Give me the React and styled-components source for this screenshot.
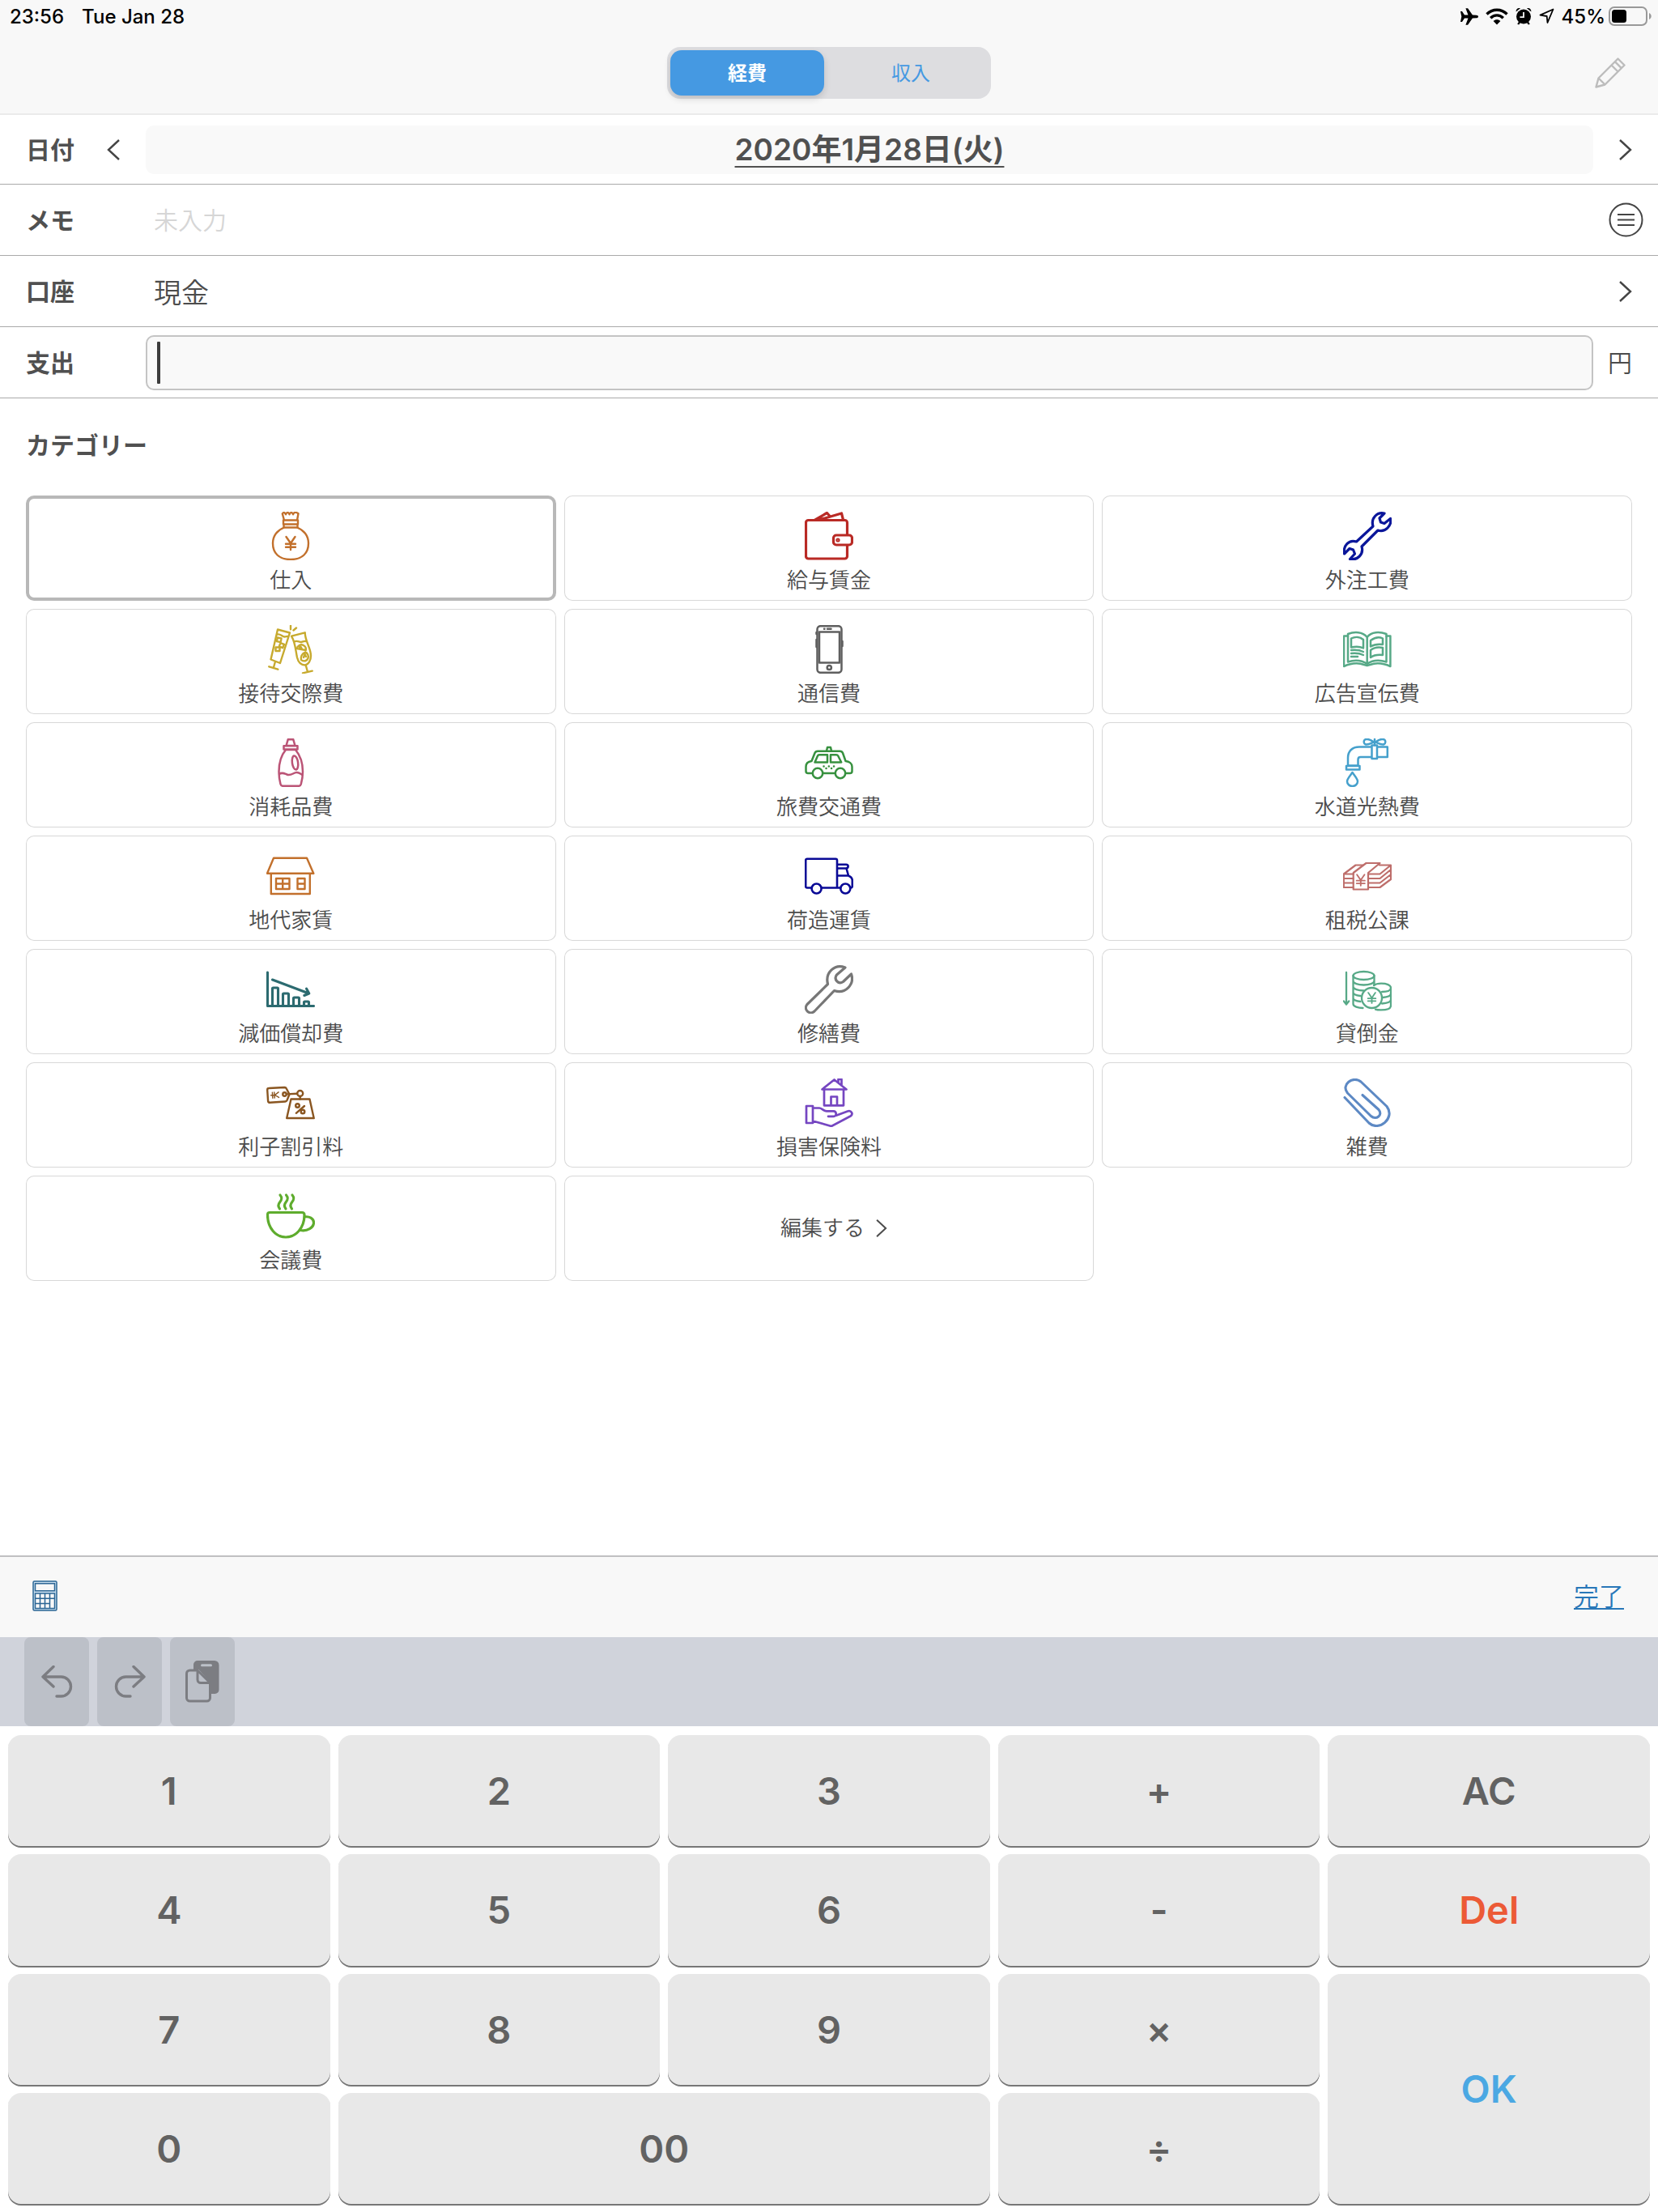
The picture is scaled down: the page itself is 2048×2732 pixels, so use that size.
import React from "react";
import styled, { createGlobalStyle, css } from "styled-components";

const GlobalStyle = createGlobalStyle`
  *, *::before, *::after { box-sizing: border-box; }
  body {
    margin: 0;
    background: #fff;
    color: #4c4c4c;
    font-family: Inter, "Noto Sans CJK JP", sans-serif;
    font-weight: 350;
  }
  button, input {
    margin: 0;
    padding: 0;
    border: 0;
    background: none;
    color: inherit;
    font: inherit;
    outline: none;
  }
  svg { display: block; flex: none; }
`;

const Page = styled.div`
  min-height: 100vh;
  display: flex;
  flex-direction: column;
`;

/* ---------- header ---------- */

const Header = styled.header`
  background: #f8f8f8;
  border-bottom: 2px solid #ebebeb;
`;

const StatusBar = styled.div`
  height: 40px;
  padding: 0 8px 0 12px;
  display: flex;
  align-items: center;
  justify-content: space-between;
  color: #000;
  font-size: 24px;
  font-weight: 500;
`;

const StatusGroup = styled.div`
  display: flex;
  align-items: center;
  gap: ${(p) => p.$gap}px;
`;

const BatteryGroup = styled.span`
  display: flex;
  align-items: center;
  gap: 4px;
`;

const NavBar = styled.div`
  height: 100px;
  padding: 0 40px;
  display: grid;
  grid-template-columns: 1fr auto 1fr;
  align-items: center;
`;

const Segmented = styled.div`
  grid-column: 2;
  width: 400px;
  height: 64px;
  padding: 4px;
  display: grid;
  grid-template-columns: 1fr 1fr;
  gap: 12px;
  border-radius: 16px;
  background: #dddde0;
`;

const Segment = styled.button`
  padding-bottom: 4px;
  border-radius: 14px;
  font-size: 24px;
  font-weight: 400;
  color: #4599e2;
  ${(p) =>
    p.$active &&
    css`
      color: #fff;
      font-weight: 700;
      background: #4599e2;
      box-shadow: 0 4px 8px rgba(0, 0, 0, 0.14);
    `}
`;

const EditButton = styled.button`
  justify-self: end;
  color: #bcbcbc;
`;

/* ---------- form ---------- */

const Row = styled.div`
  height: 88px;
  display: grid;
  grid-template-columns: 180px minmax(0, 1fr) 80px;
  align-items: center;
  border-bottom: 1px solid #aaa;
  &:first-child { height: 86px; }
`;

const Lead = styled.div`
  padding-left: 32px;
  display: flex;
  align-items: center;
  gap: 40px;
`;

const Label = styled.label`
  color: #505050;
  font-size: 30px;
  line-height: 44px;
  font-weight: 700;
`;

const Trail = styled.div`
  display: flex;
  align-items: center;
  justify-content: center;
`;

const Unit = styled.span`
  padding: 0 14px 4px 0;
  font-size: 30px;
`;

const IconButton = styled.button`
  display: flex;
  color: #444;
`;

const DateButton = styled.button`
  height: 60px;
  padding-bottom: 6px;
  border-radius: 10px;
  background: #f9f9f9;
  color: #505050;
  font-size: 37px;
  font-weight: 600;
  text-decoration: underline;
  text-decoration-thickness: 2px;
  text-underline-offset: 7px;
`;

const MemoInput = styled.input`
  height: 60px;
  padding: 0 10px;
  font-size: 30px;
  &::placeholder { color: #d6d6d6; opacity: 1; }
`;

const AccountButton = styled.button`
  height: 60px;
  padding: 0 10px;
  font-size: 34px;
  text-align: left;
`;

const AmountField = styled.div`
  height: 68px;
  padding: 0 12px;
  display: flex;
  align-items: center;
  border: 2px solid #c4c4c4;
  border-radius: 10px;
  background: #f9f9f9;
`;

const Caret = styled.span`
  width: 4px;
  height: 52px;
  border-radius: 1px;
  background: #3c3c3c;
`;

const AmountInput = styled.input`
  flex: 1;
  min-width: 0;
  height: 60px;
  font-size: 37px;
`;

/* ---------- categories ---------- */

const Section = styled.section`
  padding: 36px 32px;
`;

const SectionTitle = styled.h2`
  margin: 0 0 40px;
  color: #505050;
  font-size: 30px;
  line-height: 44px;
  font-weight: 700;
`;

const TileGrid = styled.div`
  display: grid;
  grid-template-columns: repeat(3, minmax(0, 1fr));
  gap: 10px;
`;

const Tile = styled.button`
  height: 130px;
  padding: ${(p) => (p.$inline ? "0 0 0 12px" : "10px 0 0")};
  display: flex;
  flex-direction: ${(p) => (p.$inline ? "row" : "column")};
  align-items: center;
  justify-content: center;
  gap: ${(p) => (p.$inline ? 14 : 10)}px;
  border-radius: 10px;
  box-shadow: inset 0 0 0 ${(p) => (p.$selected ? "4px #b8b8b8" : "1px #d8d8d8")};
  font-size: 26px;
  line-height: 30px;
`;

const TileIcon = styled.svg.attrs({ viewBox: "0 0 60 60", width: 60, height: 60 })`
  fill: none;
  stroke: ${(p) => p.$color};
  stroke-width: ${(p) => p.$w};
  stroke-linejoin: round;
  stroke-linecap: round;
`;

/* ---------- keyboard ---------- */

const Keyboard = styled.footer`
  margin-top: auto;
`;

const Toolbar = styled.div`
  height: 101px;
  padding: 0 42px 4px 40px;
  display: flex;
  align-items: center;
  justify-content: space-between;
  border-top: 2px solid #c0c0c2;
  background: #f8f8f8;
`;

const DoneLink = styled.a`
  padding-bottom: 2px;
  color: #2877b8;
  font-size: 31px;
  text-decoration: underline;
  text-decoration-thickness: 2px;
  text-underline-offset: 3px;
`;

const ShortcutBar = styled.div`
  height: 110px;
  padding: 0 30px;
  display: flex;
  gap: 10px;
  background: #d0d3db;
`;

const ShortcutButton = styled.button`
  width: 80px;
  display: flex;
  align-items: center;
  justify-content: center;
  border-radius: 8px;
  background: #bcc0c8;
  color: #7c7d82;
`;

const Keypad = styled.div`
  height: 600px;
  padding: 11px 10px 8px;
  display: grid;
  grid-template-columns: repeat(5, minmax(0, 1fr));
  grid-template-rows: repeat(4, 1fr);
  gap: 8px 10px;
`;

const Key = styled.button`
  grid-column: span ${(p) => p.$cols || 1};
  grid-row: span ${(p) => p.$rows || 1};
  padding-bottom: 2px;
  border-radius: 16px;
  background: #e8e8e8;
  box-shadow: inset 0 -2px 0 #777;
  color: ${(p) => p.$color || "#626262"};
  font-size: 47px;
  font-weight: 600;
`;

/* ---------- small icons ---------- */

const Chevron = ({ left, w = 16, h = 26 }) => (
  <svg width={w} height={h} viewBox="0 0 16 26" fill="none" stroke="currentColor" strokeWidth="2.4">
    <path d={left ? "M15 1 2 13l13 12" : "M1 1l13 12L1 25"} />
  </svg>
);

const Airplane = () => (
  <svg width="22" height="21" viewBox="0 0 22 21" fill="currentColor">
    <path d="M0 4h2L5 8.500l4.500.1L6.400.3h2.700l5.800 8.300 4.600.1c1.500 0 2.500.8 2.500 1.800s-1 1.800-2.500 1.800l-4.600.1-5.800 8.300H6.400l3.100-8.300L5 12.500 2 17H0l1.300-6.500z" />
  </svg>
);

const Wifi = () => (
  <svg width="28" height="21" viewBox="0 0 28 21" fill="none" stroke="currentColor" strokeWidth="3.4">
    <path d="M1.500 7.500C8.500.4 19.500.4 26.500 7.500M6.200 12.200c4.400-4.400 11.200-4.400 15.600 0" />
    <path d="M14 20.500l-4.400-4.600c2.600-2.200 6.200-2.200 8.800 0z" fill="currentColor" stroke="none" />
  </svg>
);

const Alarm = () => (
  <svg width="20" height="22" viewBox="0 0 20 22" fill="currentColor">
    <circle cx="10" cy="11.5" r="9" />
    <path d="M.6 5.400C.4 2.200 3 .2 6 1.200zM19.400 5.400C19.600 2.200 17 .2 14 1.200zM2.200 20.800l2-3.200 1.800 1.400-1.800 2.400zM17.800 20.800l-2-3.200-1.800 1.400 1.800 2.400z" />
    <path d="M10 6v6.200H5.400" fill="none" stroke="#f8f8f8" strokeWidth="1.8" />
  </svg>
);

const Location = () => (
  <svg width="19" height="20" viewBox="0 0 19 20" fill="none" stroke="currentColor" strokeWidth="1.8" strokeLinejoin="round">
    <path d="M17.500 1.500L1.500 8.600l8.200 1.400.8 8z" />
  </svg>
);

const Battery = () => (
  <svg width="53" height="24" viewBox="0 0 53 24">
    <rect x="1" y="1" width="46" height="22" rx="6" fill="none" stroke="#999" strokeWidth="2" />
    <rect x="4" y="4" width="18" height="16" rx="3.5" fill="#000" />
    <path d="M50 8c3.600 1.600 3.600 6.400 0 8z" fill="#999" />
  </svg>
);

const Pencil = () => (
  <svg width="38" height="38" viewBox="0 0 38 38" fill="none" stroke="currentColor" strokeWidth="2.4" strokeLinejoin="round">
    <path d="M1.500 36.500L4.500 25.500 28.500 1.500l8 8L12.500 33.500zM4.500 25.500l8 8M24.800 5.200l8 8M20.500 9.500l8 8" />
  </svg>
);

const ListCircle = () => (
  <svg width="43" height="43" viewBox="0 0 43 43" fill="none" stroke="currentColor" strokeWidth="2">
    <circle cx="21.5" cy="21.5" r="20" />
    <path d="M11 15h21M11 21.500h21M11 28h21" />
  </svg>
);

const Calculator = () => (
  <svg width="31" height="38" viewBox="0 0 31 38" fill="none" stroke="#2a6594" strokeWidth="1.5">
    <rect x="1" y="1" width="29" height="36" rx="1.5" fill="#cfe3f2" />
    <rect x="3.5" y="3.8" width="24" height="9" fill="#f8f8f8" />
    <rect x="3.5" y="16" width="24" height="18.5" fill="#f8f8f8" />
    <path d="M9.500 16v18.500M15.500 16v18.500M21.500 16v18.500M3.500 22.200h24M3.500 28.400h18" />
  </svg>
);

const Undo = ({ flip }) => (
  <svg width="39" height="40" viewBox="0 0 39 40" fill="none" stroke="currentColor" strokeWidth="3.4" strokeLinecap="round" strokeLinejoin="round">
    <g transform={flip ? "translate(39 0) scale(-1 1)" : undefined}>
      <path d="M15 1.500L2 14l13 12M2 14h22.500a12 12 0 0 1 0 24H19" />
    </g>
  </svg>
);

const Paste = () => (
  <svg width="42" height="52" viewBox="0 0 42 52" fill="none">
    <path d="M15 0h21a5.500 5.500 0 0 1 5.500 5.500V36a5 5 0 0 1-5 5H30V26L16.500 11H10V5a5 5 0 0 1 5-5z" fill="currentColor" />
    <path d="M20.500 5.800h11" stroke="#bcc0c8" strokeWidth="3" strokeLinecap="round" />
    <path d="M15 12H5.500A4 4 0 0 0 1.500 16v30a4 4 0 0 0 4 4h21a4 4 0 0 0 4-4V27.500zM15 12v11.500a4 4 0 0 0 4 4h11.500" fill="#bcc0c8" stroke="currentColor" strokeWidth="3" strokeLinejoin="round" />
  </svg>
);

/* Yen mark drawn around (0,0), 12 wide and 16 high */
const Yen = ({ x, y, s = 1, r = 0 }) => (
  <path
    transform={`translate(${x} ${y}) rotate(${r}) scale(${s})`}
    d="M-5.500-8L0 0l5.500-8M0 0v8M-6 .8H6M-6 4.800H6"
  />
);

const categories = [
  { name: "仕入", color: "#c2702c", w: 2.4, art: (
    <>
      <path d="M22 19.500c-8 3-14 10-14 19.500 0 12 7.500 20 22 20s22-8 22-20c0-9.500-6-16.500-14-19.500z" />
      <path d="M22 10.500L19.800 2.500c1.200-2 3-2 4.200.8 1.200-3 3.400-3 4.500 0 1.200-3 3.400-3 4.500 0 1.200-3 3.400-3 6.500-1L38 10.500zM21 10.500v5M39 10.500v5M21 15.500h18M21.500 15.500v4M38.500 15.500v4" />
      <Yen x={30} y={39} />
    </>
  ) },
  { name: "給与賃金", color: "#b92a25", w: 3.2, art: (
    <>
      <path d="M52.500 28V13.500a3 3 0 0 0-3-3H4.500a3 3 0 0 0-3 3V55a3 3 0 0 0 3 3h45a3 3 0 0 0 3-3V42" />
      <rect x="35.5" y="29" width="23" height="12" rx="3.5" />
      <circle cx="41" cy="35" r="1" />
      <path d="M13 10L27.500 1.500l3.500 4M18 10l27.500-8L47.500 10" />
    </>
  ) },
  { name: "外注工費", color: "#0a169a", w: 3.2, art: (
    <path d="M51 2C42 0 34 8 37 18L16.500 37C7 34 0 42 1.500 52L8 45.500l4.500 1.500 2 5L8.500 58.500C17 60.500 26 53 23 43L43 23C52 26 60.500 17 58.500 8.500L51 14.500 46.500 13 45 8z" />
  ) },
  { name: "接待交際費", color: "#c7aa2e", w: 2.4, art: (
    <>
      <path d="M14 5.500L29 9.500 17 47 5.500 42.500zM13.500 11.500c4-1 6 3 9 3 2 0 3-1 4.500-.5M11 45L8.800 53M3.300 51.300l11 3.400M30 .8v4.500M33.500 6.500L37 3.500" />
      <path d="M13.800 15.500l4.800 1-1 4.700-4.800-1zM17.500 22l4.500 1.800-1.800 4.400-4.400-1.800zM11.500 27.500h5v4.500h-5z" />
      <path d="M31 13.700L47.700 9.300C47.700 20 55 28 55 38c0 6-3 10.500-7 11.500-5 0-8.500-3.500-10-9.500C36 31 36 22 31 13.700zM34.500 20.500c4-2 6 1 9 .5 2-.5 3-1.500 5-1M48.700 49.500l2.200 8M45 59.300l11.700-2.700" />
      <path d="M37.800 29c1-4 5-6 8-4 2.500 1.500 3.500 4 3 6zM41 28l1-2 2 3.500M43 43c-1-3.500 1-8 5-9.500 3 1 4.500 4.500 3.500 7.500-1.200 3.500-5 4.500-8.500 2zM46 40l1.500-4 1.500 3" />
    </>
  ) },
  { name: "通信費", color: "#5f5f5f", w: 2.5, art: (
    <>
      <rect x="15.5" y="1.2" width="30" height="57.6" rx="4" />
      <rect x="18" y="8.6" width="25" height="38" />
      <circle cx="30.3" cy="52.5" r="2.6" />
      <path d="M24 4.800h.5M28 4.800h4.500M14.500 9v2M14.500 18v9M46.500 20v6" />
    </>
  ) },
  { name: "広告宣伝費", color: "#57a987", w: 2.5, art: (
    <>
      <path d="M29.700 15C24 8 14 8 6 11v34.500c8-2.500 17-2 23.700 2.500C36 43.500 45 43 53.500 45.500V11C45 8 35 8 29.700 15zM29.700 15v33" />
      <path d="M6 13.500H1v37.500c9-4 18-4.500 25-2l3.700 1 3.700-1c7-2.500 16-2 25 2V13.500h-5" />
      <path d="M10 16.500c5-2.500 11-2 15 1.500v10.500c-4-2-10-2-15-1zM10 31c5-.5 11 0 15 2M10 35c5-.5 11 0 15 2M10 39h8M49 16.500c-5-2.500-11-.5-15 2.500v7.500c4-2.500 10-3 15-2.500zM49 28c-5-1-11 0-15 3v9c4-3 10-3.500 15-3z" />
    </>
  ) },
  { name: "消耗品費", color: "#bb5476", w: 2.5, art: (
    <>
      <path d="M26.800 1.200h6.400L35.500 9h-11zM21.500 9.200h17v4.300h-17zM24 14C19 20 15.500 30 15.500 41c0 6 .8 11 2 15.500.5 1.800 1.500 2.300 3 2.300h19.500c1.500 0 2.300-.5 2.800-2.300 1.200-4.500 2.200-9.500 2.200-15.500C45 30 41 20 36 14z" />
      <path d="M16 44c4-3 7 0 10.500 1 5 1 7-3 11-3 3 0 5 2 7 3" />
      <ellipse cx="35.5" cy="30" rx="3.6" ry="8.5" transform="rotate(-8 35.5 30)" />
    </>
  ) },
  { name: "旅費交通費", color: "#37913f", w: 2.5, art: (
    <>
      <path d="M9.500 43H4c-1.500 0-2.500-1-2.500-2.500V35c0-4 3-6.500 7-7L12.500 18c.6-1.500 2-2.300 3.500-2.300h27.500c1.500 0 2.900.8 3.500 2.300L50.500 28c4.500.5 8 3 8 7v5.500c0 1.500-1 2.500-2.500 2.500h-5.500M22.500 43h15" />
      <path d="M27 15.500l1-4.500h4l1 4.500M28 29.500H12.500L16 21.500c.3-.8 1-1.300 2-1.300h10zM32 29.500v-9.300h7c1 0 1.800.5 2.200 1.300l4 8z" />
      <circle cx="16" cy="43" r="6.2" />
      <circle cx="44" cy="43" r="6.2" />
      <path d="M23.500 34.500h.1M26.500 37h.1M29.800 34.500h.1M33 37h.1M36 34.500h.1" />
    </>
  ) },
  { name: "水道光熱費", color: "#45a0cc", w: 2.5, art: (
    <>
      <path d="M35.500 10.500H20C11 10.500 6 16 6 24v9.500h12.500V26c0-2 1-3 3-3h14M42 10.500h12.800V23H42M35.500 8.500H42V25h-6.500zM4 34h16.500v4.500H4z" />
      <path d="M39 8.500V1M38 4.500C33 1 30 0 27 1.500c-2 1.500-1.500 5 .5 5.800 3 1 6-.8 10.500-2.800zM40 4.500c5-3.500 8-4.500 11-3 2 1.500 1.500 5-.5 5.800-3 1-6-.8-10.500-2.800z" />
      <path d="M11.500 42c-3.500 5-6.500 8-6.500 11a6.500 6 0 0 0 13 0c0-3-3-6-6.500-11z" />
    </>
  ) },
  { name: "地代家賃", color: "#c2702c", w: 2.4, art: (
    <>
      <path d="M9 7.800h41l8.300 19H1zM5.800 26.800V52h48V26.800" />
      <path d="M12 33h16.500v13H12zM20.200 33v13M12 39.500h16.500M38.500 33h9v13h-9zM38.500 39.500h9" />
    </>
  ) },
  { name: "荷造運賃", color: "#0a0a96", w: 2.6, art: (
    <>
      <path d="M8.500 44.500H3a1.800 1.800 0 0 1-1.800-1.800V10.500A1.800 1.800 0 0 1 3 8.700h35.200A1.800 1.800 0 0 1 40 10.500v34M20.700 44.500h23.600M40 15.700h11c3.500 0 3.500 4.800 0 4.800H40M51.500 20.500L54 29.500H40M54 29.500c3.500 1.500 4.800 3 4.800 6v7c0 1.200-.8 2-2 2" />
      <circle cx="14.6" cy="45.5" r="6" />
      <circle cx="50.3" cy="45.5" r="6" />
    </>
  ) },
  { name: "租税公課", color: "#be6e6b", w: 2.2, art: (
    <>
      <path d="M12.700 27.500H.8v16.500h11.900M.8 33h11.900M.8 38.500h11.900M.8 27.500L15.500 16.500H25" />
      <path d="M12.700 46.500V26L28.500 14h17L31 26v20.500zM45 16.500h14L45.500 27.500H31M59 16.500V34L45.500 44H31M31 33h14.500L59 22M31 38.500h14.500L59 28" />
      <Yen x={21.8} y={35} s={0.85} />
    </>
  ) },
  { name: "減価償却費", color: "#2c6b70", w: 3.1, art: (
    <>
      <path d="M1.500 9v41.500h57" />
      <path d="M7.500 50V29a1 1 0 0 1 1-1h5a1 1 0 0 1 1 1v21M20.500 50V36a1 1 0 0 1 1-1h5a1 1 0 0 1 1 1v14M33.500 50v-9a1 1 0 0 1 1-1h5a1 1 0 0 1 1 1v9M46.500 50v-4a1 1 0 0 1 1-1h4a1 1 0 0 1 1 1v4" />
      <path d="M7.500 18L52.500 35M49.500 29l3.300 6-6 2.500" />
    </>
  ) },
  { name: "修繕費", color: "#777", w: 3.2, art: (
    <path d="M50 3C37-2 25 9 28.500 23.500L3 48.500c-5 6 3 14 9 8.500L36.500 31.500C50 36 62 24 57.500 11L47.500 20.500c-6 4-12-3-8-8.500z" />
  ) },
  { name: "貸倒金", color: "#57a987", w: 2.3, art: (
    <>
      <path d="M4 9v39M.8 44.500L4 48.500l3.200-4" />
      <ellipse cx="25.5" cy="13" rx="13" ry="5" />
      <path d="M12.500 13v35c0 3 6 5 12 5M38.500 13v12M12.500 19.500c0 3 6 5 13 5s13-2 13-5M12.500 26.500c0 3 6 5 13 5M12.500 33.500c0 2.500 4 4 9 4.500M12.500 40.500c0 2.500 4 4 9 4.500" />
      <path d="M38 25c2-1.500 5-2.300 9-2.300 7 0 12 2 12 5.200v22c0 3.500-5 5.500-12 5.500-3 0-5 0-7-.8M59 28c0 3-4 5-11 5M59 35c0 3-4 4.500-10 5M59 42.500c0 3-4 4.500-11 5" />
      <circle cx="35.5" cy="40.5" r="12.5" />
      <Yen x={35.5} y={40.5} s={0.8} />
    </>
  ) },
  { name: "利子割引料", color: "#8a5621", w: 2.4, art: (
    <>
      <path d="M1.200 14c0-1.200.5-2 2-2l19.300-1c1.200 0 1.800.4 2.300 1.500L28.500 19.500 25.500 27c-.5 1-1 1.400-2.200 1.500l-19 1.300c-1.300 0-2-.5-2.200-1.800z" />
      <circle cx="22.5" cy="19.5" r="2.2" />
      <path d="M25 19.400l13-.7M41.700 22v3.500" />
      <circle cx="41.7" cy="18.5" r="3.5" />
      <path d="M30.500 25.500h23L58.700 49H25.200z" />
      <Yen x={10.5} y={20.5} s={0.6} r={86} />
      <circle cx="38.5" cy="33.5" r="2.3" />
      <circle cx="45" cy="41" r="2.3" />
      <path d="M47 34L36.800 42.800" />
    </>
  ) },
  { name: "損害保険料", color: "#7546c1", w: 2.7, art: (
    <>
      <path d="M36.500 1.500L51.500 13.500h-30zM24 13.500v19.800h24V13.500M32.500 33V22.500h7.500V33M41.500 5V1h4v7.500" />
      <path d="M2 34h8v21H2zM10 36.500h8c3 0 5 3.800 9 3.800h8.500c4 0 4.500 6.500 0 6.500H29M39.500 45.500l13.500-5c4.500-1.500 7.500 3.500 3.500 6L33 59 10 52.500" />
    </>
  ) },
  { name: "雑費", color: "#5d89c4", w: 3.1, art: (
    <path d="M2 23.500L32 55C44 66 65 49 54 34.500L22 4C12-4-3 8 5.500 18L34.500 46.500C41 52 49.500 45 44 38.500L24 20.500" />
  ) },
  { name: "会議費", color: "#5eac2d", w: 3.2, art: (
    <>
      <path d="M4 25.500h40c2 0 3 1 3 3C47 45 36 56 24 56S1.500 45 1.500 28.500c0-2 1-3 2.500-3zM47 31c6-1 11.500 1.500 11.500 7 0 6-8 11-16 9.500" />
      <path d="M17 4c3 3.500 2 6-.5 9s-1.500 6 0 8M24.500 4c3 3.500 2 6-.5 9s-1.500 6 0 8M32 4c3 3.500 2 6-.5 9s-1.500 6 0 8" />
    </>
  ) },
];

const keys = [
  { t: "1" }, { t: "2" }, { t: "3" }, { t: "+" }, { t: "AC" },
  { t: "4" }, { t: "5" }, { t: "6" }, { t: "-" }, { t: "Del", color: "#ec5a36" },
  { t: "7" }, { t: "8" }, { t: "9" }, { t: "×" }, { t: "OK", color: "#4ba8e3", rows: 2 },
  { t: "0" }, { t: "00", cols: 2 }, { t: "÷" },
];

export default function App() {
  return (
    <Page>
      <GlobalStyle />
      <Header>
        <StatusBar>
          <StatusGroup $gap={22}>
            <span>23:56</span>
            <span>Tue Jan 28</span>
          </StatusGroup>
          <StatusGroup $gap={9}>
            <Airplane />
            <Wifi />
            <Alarm />
            <Location />
            <BatteryGroup>
              45%
              <Battery />
            </BatteryGroup>
          </StatusGroup>
        </StatusBar>
        <NavBar>
          <Segmented>
            <Segment type="button" $active aria-pressed="true">経費</Segment>
            <Segment type="button" aria-pressed="false">収入</Segment>
          </Segmented>
          <EditButton type="button" aria-label="編集"><Pencil /></EditButton>
        </NavBar>
      </Header>

      <form onSubmit={(e) => e.preventDefault()}>
        <Row>
          <Lead>
            <Label htmlFor="date">日付</Label>
            <IconButton type="button" aria-label="前の日"><Chevron left /></IconButton>
          </Lead>
          <DateButton id="date" type="button">2020年1月28日(火)</DateButton>
          <Trail>
            <IconButton type="button" aria-label="次の日"><Chevron /></IconButton>
          </Trail>
        </Row>
        <Row>
          <Lead><Label htmlFor="memo">メモ</Label></Lead>
          <MemoInput id="memo" placeholder="未入力" />
          <Trail>
            <IconButton type="button" aria-label="メモ一覧"><ListCircle /></IconButton>
          </Trail>
        </Row>
        <Row>
          <Lead><Label htmlFor="account">口座</Label></Lead>
          <AccountButton id="account" type="button">現金</AccountButton>
          <Trail>
            <IconButton type="button" aria-label="口座を選ぶ"><Chevron /></IconButton>
          </Trail>
        </Row>
        <Row>
          <Lead><Label htmlFor="amount">支出</Label></Lead>
          <AmountField>
            <Caret />
            <AmountInput id="amount" inputMode="none" />
          </AmountField>
          <Trail><Unit>円</Unit></Trail>
        </Row>
      </form>

      <Section>
        <SectionTitle>カテゴリー</SectionTitle>
        <TileGrid>
          {categories.map((c, i) => (
            <Tile key={c.name} type="button" $selected={i === 0}>
              <TileIcon $color={c.color} $w={c.w}>{c.art}</TileIcon>
              {c.name}
            </Tile>
          ))}
          <Tile type="button" $inline>
            編集する
            <Chevron w={14} h={22} />
          </Tile>
        </TileGrid>
      </Section>

      <Keyboard>
        <Toolbar>
          <IconButton type="button" aria-label="電卓"><Calculator /></IconButton>
          <DoneLink href="#done">完了</DoneLink>
        </Toolbar>
        <ShortcutBar>
          <ShortcutButton type="button" aria-label="取り消す"><Undo /></ShortcutButton>
          <ShortcutButton type="button" aria-label="やり直す"><Undo flip /></ShortcutButton>
          <ShortcutButton type="button" aria-label="ペースト"><Paste /></ShortcutButton>
        </ShortcutBar>
        <Keypad>
          {keys.map((k) => (
            <Key key={k.t} type="button" $cols={k.cols} $rows={k.rows} $color={k.color}>
              {k.t}
            </Key>
          ))}
        </Keypad>
      </Keyboard>
    </Page>
  );
}
